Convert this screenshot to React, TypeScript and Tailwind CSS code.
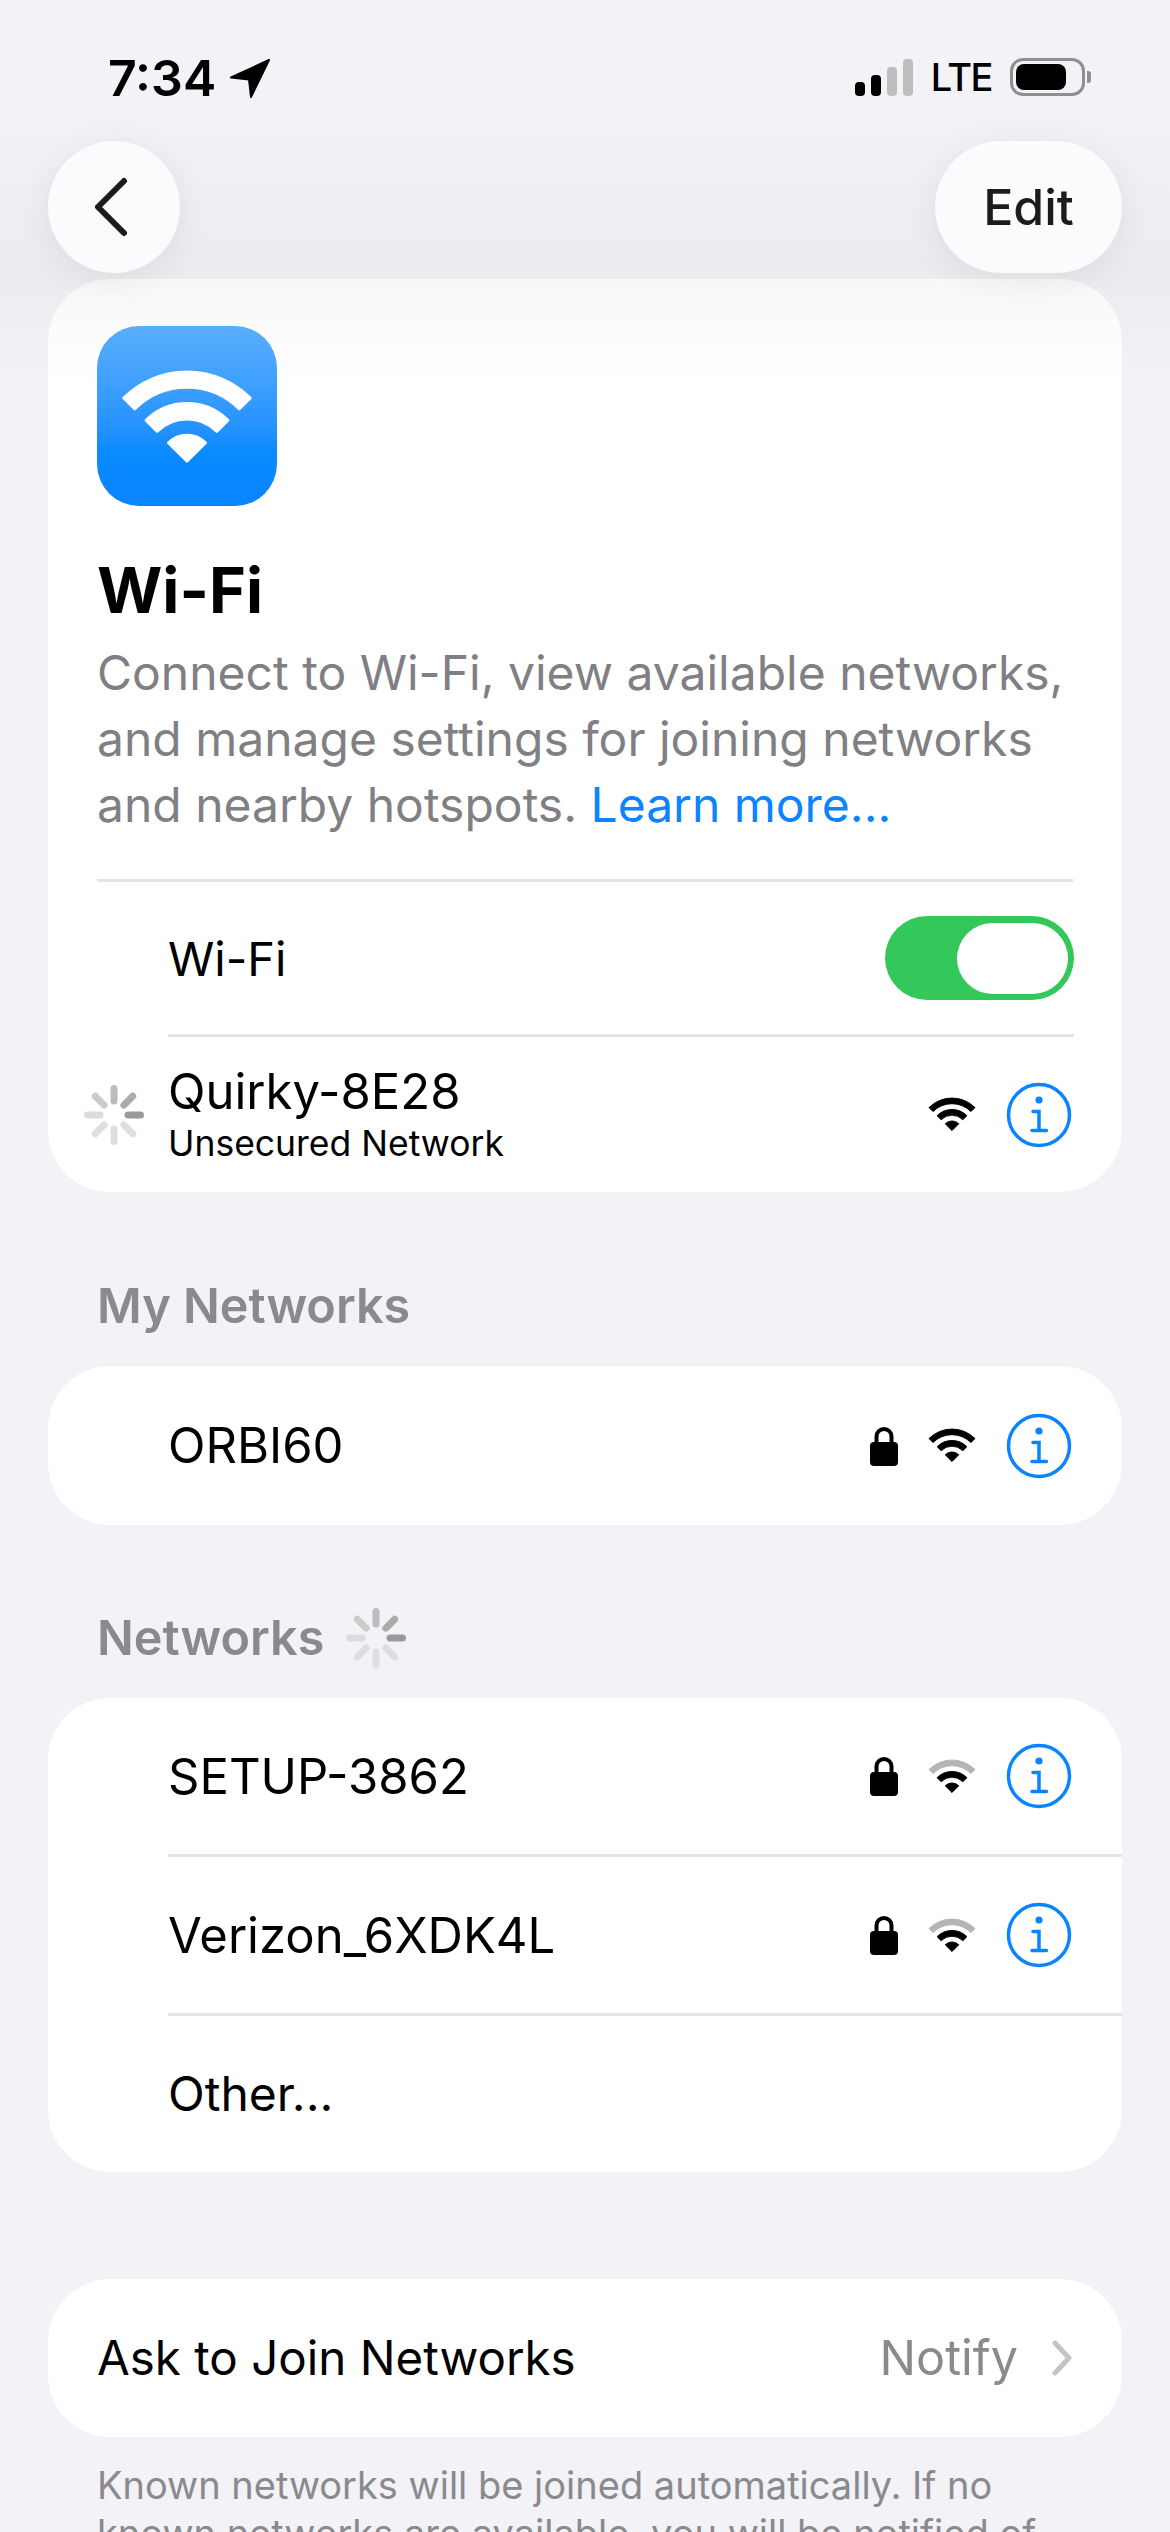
const FONT = 'font-[Inter,"Liberation_Sans",sans-serif]';

function WifiGlyph({ weak = false, className = '' }: { weak?: boolean; className?: string }) {
    return (
        <svg viewBox="-25 -35 50 36" className={className} fill="currentColor" stroke="currentColor" strokeWidth="1" strokeLinejoin="round">
            <path
                d="M-24 -24A34 34 0 0 1 24 -24L19.8 -19.8A28 28 0 0 0 -19.8 -19.8Z"
                className={weak ? 'text-[#b4b4b4]' : ''}
            />
            <path d="M-15.56 -15.56A22 22 0 0 1 15.56 -15.56L11.31 -11.31A16 16 0 0 0 -11.31 -11.31Z" />
            <path d="M0 0L-7.07 -7.07A10 10 0 0 1 7.07 -7.07Z" />
        </svg>
    );
}

function Spinner() {
    const shades = ['#9a9a9a', '#ababab', '#bcbcbc', '#cbcbcb', '#dcdcdc', '#dedede', '#dedede', '#dedede'];
    return (
        <svg viewBox="-30 -30 60 60" className="h-[60px] w-[60px] shrink-0">
            {shades.map((shade, i) => (
                <line
                    key={i}
                    x1="14"
                    y1="0"
                    x2="26.5"
                    y2="0"
                    stroke={shade}
                    strokeWidth="7"
                    strokeLinecap="round"
                    transform={`rotate(${-45 * i})`}
                />
            ))}
        </svg>
    );
}

function InfoIcon() {
    return (
        <svg viewBox="0 0 66 66" className="h-[66px] w-[66px] shrink-0 text-[#0a84ff]" fill="none" stroke="currentColor" strokeWidth="3.5" strokeLinecap="round">
            <circle cx="33" cy="33" r="30.5" />
            <circle cx="33" cy="18" r="3.6" fill="currentColor" stroke="none" />
            <path d="M27 29.5H33V48.5M26 48.5H40.5" />
        </svg>
    );
}

function LockIcon() {
    return (
        <svg viewBox="0 0 28 40" className="h-[40px] w-[28px] shrink-0">
            <path d="M6.5 19V10.5a7.5 7.5 0 0 1 15 0V19" fill="none" stroke="black" strokeWidth="4" />
            <rect x="0" y="16" width="28" height="24" rx="4" fill="black" />
        </svg>
    );
}

function NetworkRow({ name, locked, weak, divider }: { name: string; locked?: boolean; weak?: boolean; divider?: boolean }) {
    return (
        <div className="flex h-[159px] flex-col">
            <div className="flex flex-1 items-center pl-[120px] pr-[50px]">
                <span className="flex-1 text-[49px] leading-none text-black">{name}</span>
                <div className="flex items-center gap-[30px]">
                    {locked && <LockIcon />}
                    <WifiGlyph weak={weak} className="h-[34.5px] w-[48px] text-black" />
                    <InfoIcon />
                </div>
            </div>
            {divider && <div className="ml-[120px] h-[3px] bg-[#e4e4e6]" />}
        </div>
    );
}

export default function App() {
    return (
        <div className={`relative h-[2532px] overflow-hidden bg-[#f2f2f7] ${FONT}`}>
            {/* scroll edge haze under the nav bar */}
            <div className="pointer-events-none absolute inset-x-0 top-[100px] z-10 h-[290px] bg-gradient-to-b from-transparent via-black/[0.03] via-60% to-transparent" />

            <div className="relative z-20 flex h-[141px] items-start justify-between pl-[108px] pr-[79px] pt-[50px]">
                <div className="flex items-center gap-[14px]">
                    <span className="text-[50px] font-semibold leading-[56px] text-black">7:34</span>
                    <svg viewBox="0 0 40 40" className="h-[40px] w-[40px]">
                        <path d="M39 2L1 19.5 19 21.5 21 39Z" fill="black" stroke="black" strokeWidth="2" strokeLinejoin="round" />
                    </svg>
                </div>
                <div className="flex items-center pt-[8px]">
                    <div className="flex items-end gap-[6px]">
                        <div className="h-[14px] w-[10px] rounded-[4px] bg-black" />
                        <div className="h-[21px] w-[10px] rounded-[4px] bg-black" />
                        <div className="h-[29px] w-[10px] rounded-[4px] bg-[#bdbdbd]" />
                        <div className="h-[37px] w-[10px] rounded-[4px] bg-[#bdbdbd]" />
                    </div>
                    <span className="ml-[18px] text-[38px] font-medium leading-[38px] tracking-[-1.5px] text-black">LTE</span>
                    <div className="ml-[18px] flex h-[38px] w-[75px] items-center rounded-[13px] border-[3px] border-[#8e8e93] pl-[3px]">
                        <div className="h-[26px] w-[50px] rounded-[8px] bg-black" />
                    </div>
                    <div className="ml-[2px] h-[12px] w-[4px] rounded-r-[3px] bg-[#8e8e93]" />
                </div>
            </div>

            <div className="relative z-20 flex h-[132px] items-center justify-between px-[48px]">
                <button type="button" className="flex h-[132px] w-[132px] items-center justify-center rounded-full bg-[#fbfbfd] shadow-[0_6px_36px_rgba(0,0,0,0.07)]">
                    <svg viewBox="0 0 38 60" className="mr-[7px] h-[60px] w-[38px]" fill="none" stroke="#1c1c1e" strokeWidth="6" strokeLinecap="round" strokeLinejoin="round">
                        <path d="M32 4L6 30 32 56" />
                    </svg>
                </button>
                <button type="button" className="flex h-[132px] w-[187px] items-center justify-center rounded-full bg-[#fbfbfd] text-[50px] font-medium text-[#1c1c1e] shadow-[0_6px_36px_rgba(0,0,0,0.07)]">
                    Edit
                </button>
            </div>

            <div className="mx-[48px] mt-[6px] flex flex-col rounded-[62px] bg-white">
                <div className="px-[49px] pt-[47px]">
                    <div className="flex h-[180px] w-[180px] items-center justify-center rounded-[42px] bg-gradient-to-b from-[#5ab0ff] via-[#0a8bff] via-70% to-[#0a84ff]">
                        <WifiGlyph className="h-[95px] w-[132px] text-white" />
                    </div>
                    <h1 className="mt-[48px] text-[63px] font-bold leading-[72px] text-black">Wi-Fi</h1>
                    <p className="mt-[14px] text-[48px] leading-[66px] text-[#808084]">
                        Connect to Wi-Fi, view available networks, and manage settings for joining networks and nearby hotspots.{' '}
                        <span className="text-[#0a84ff]">Learn more...</span>
                    </p>
                    <div className="mt-[41px] h-[3px] bg-[#e4e4e6]" />
                </div>
                <div className="flex h-[152px] items-center pl-[120px] pr-[48px]">
                    <span className="flex-1 text-[47px] leading-none text-black">Wi-Fi</span>
                    <div className="flex h-[84px] w-[189px] items-center justify-end rounded-full bg-[#34c759] pr-[6px]">
                        <div className="h-[71px] w-[111px] rounded-full bg-white" />
                    </div>
                </div>
                <div className="ml-[120px] mr-[48px] h-[3px] bg-[#e4e4e6]" />
                <div className="flex h-[155px] items-center pl-[36px] pr-[50px]">
                    <Spinner />
                    <div className="ml-[24px] flex flex-1 flex-col pt-[2px]">
                        <span className="text-[49px] leading-[56px] text-black">Quirky-8E28</span>
                        <span className="text-[35.5px] leading-[48px] text-black">Unsecured Network</span>
                    </div>
                    <div className="flex items-center gap-[30px]">
                        <WifiGlyph className="h-[34.5px] w-[48px] text-black" />
                        <InfoIcon />
                    </div>
                </div>
            </div>

            <div className="ml-[97px] mt-[88px] text-[48.5px] font-semibold leading-[52px] text-[#8a8a8e]">My Networks</div>
            <div className="mx-[48px] mt-[34px] rounded-[62px] bg-white">
                <NetworkRow name="ORBI60" locked />
            </div>

            <div className="ml-[97px] mt-[84px] flex h-[58px] items-center gap-[22px] text-[48.5px] font-semibold text-[#8a8a8e]">
                <span>Networks</span>
                <Spinner />
            </div>
            <div className="mx-[48px] mt-[31px] flex flex-col overflow-hidden rounded-[62px] bg-white">
                <NetworkRow name="SETUP-3862" locked weak divider />
                <NetworkRow name="Verizon_6XDK4L" locked weak divider />
                <div className="flex h-[156px] items-center pl-[120px] text-[48px] leading-none text-black">Other...</div>
            </div>

            <div className="mx-[48px] mt-[107px] flex h-[158px] items-center rounded-[62px] bg-white pl-[49px] pr-[49px]">
                <span className="flex-1 text-[47.5px] leading-none text-black">Ask to Join Networks</span>
                <span className="text-[48.5px] leading-none text-[#8a8a8e]">Notify</span>
                <svg viewBox="0 0 22 36" className="ml-[33px] h-[36px] w-[22px]" fill="none" stroke="#c4c4c7" strokeWidth="5" strokeLinecap="round" strokeLinejoin="round">
                    <path d="M4 3L18 18 4 33" />
                </svg>
            </div>
            <p className="mx-[97px] mt-[24px] text-[38px] leading-[48px] text-[#8a8a8e]">
                Known networks will be joined automatically. If no known networks are available, you will be notified of available networks.
            </p>
        </div>
    );
}
